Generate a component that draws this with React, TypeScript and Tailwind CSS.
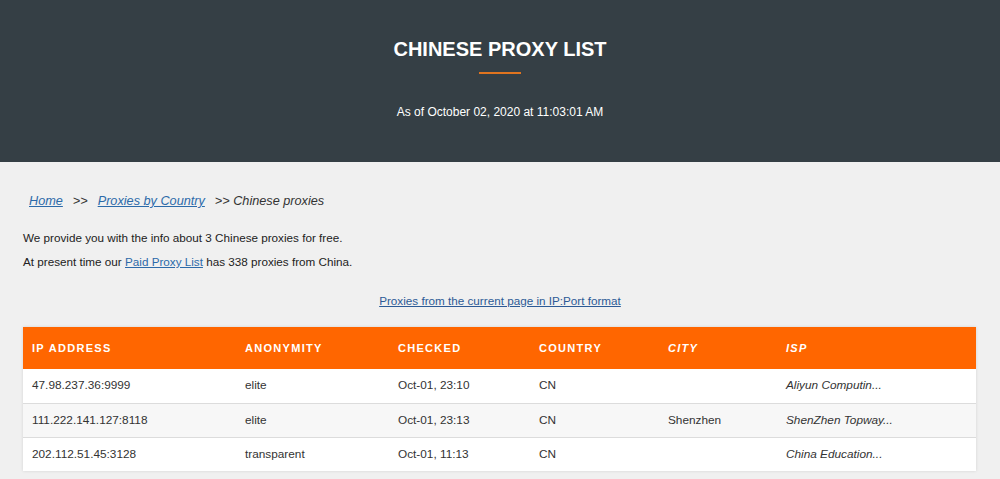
import React from 'react';

interface ProxyRow { ip: string; anon: string; checked: string; country: string; city: string; isp: string; }

const rows: ProxyRow[] = [
  { ip: '47.98.237.36:9999', anon: 'elite', checked: 'Oct-01, 23:10', country: 'CN', city: '', isp: 'Aliyun Computin...' },
  { ip: '111.222.141.127:8118', anon: 'elite', checked: 'Oct-01, 23:13', country: 'CN', city: 'Shenzhen', isp: 'ShenZhen Topway...' },
  { ip: '202.112.51.45:3128', anon: 'transparent', checked: 'Oct-01, 11:13', country: 'CN', city: '', isp: 'China Education...' },
];

const cols = 'grid grid-cols-[213px_153px_141px_129px_118px_1fr]';

export default function App() {
  return (
    <div className="min-h-[479px] bg-[#f0f0f0] font-['Liberation_Sans',Arial,sans-serif]">
      <header className="h-[162px] bg-[#353f45] flex flex-col items-center text-white">
        <h1 className="mt-[37px] text-[20px] font-bold leading-[24px]">CHINESE PROXY LIST</h1>
        <div className="mt-[11px] h-[2px] w-[42px] bg-[#e0741f]" />
        <p className="mt-[31px] text-[12px] leading-[14px]">As of October 02, 2020 at 11:03:01 AM</p>
      </header>

      <main className="px-[23px]">
        <nav className="pt-[31px] pl-[6px] text-[12.7px] italic text-[#333] leading-[16px] flex gap-[10px]">
          <a href="#" className="text-[#2c6aa9] underline">Home</a>
          <span>&gt;&gt;</span>
          <a href="#" className="text-[#2c6aa9] underline">Proxies by Country</a>
          <span>&gt;&gt; Chinese proxies</span>
        </nav>

        <div className="mt-[22px] text-[11.7px] text-[#222] leading-[14px] space-y-[10px]">
          <p>We provide you with the info about 3 Chinese proxies for free.</p>
          <p>At present time our <a href="#" className="text-[#2c6aa9] underline">Paid Proxy List</a> has 338 proxies from China.</p>
        </div>

        <p className="mt-[25px] text-center text-[11.7px] leading-[14px]">
          <a href="#" className="text-[#2c5a96] underline">Proxies from the current page in IP:Port format</a>
        </p>

        <div className="mt-[19px] w-[953px] bg-white shadow-[0_0_3px_rgba(0,0,0,0.12)]">
          <div className={`${cols} h-[42px] items-center bg-[#ff6600] text-white text-[11px] font-bold tracking-[1.3px] pl-[9px]`}>
            <span>IP ADDRESS</span>
            <span>ANONYMITY</span>
            <span>CHECKED</span>
            <span>COUNTRY</span>
            <span className="italic">CITY</span>
            <span className="italic">ISP</span>
          </div>
          {rows.map((r, i) => (
            <div
              key={r.ip}
              className={`${cols} h-[34px] items-center pl-[9px] text-[11.8px] text-[#333] ${i % 2 === 1 ? 'bg-[#f7f7f7]' : 'bg-white'} ${i > 0 ? 'border-t border-[#dcdcdc]' : ''}`}
            >
              <span>{r.ip}</span>
              <span>{r.anon}</span>
              <span>{r.checked}</span>
              <span>{r.country}</span>
              <span>{r.city}</span>
              <span className="italic">{r.isp}</span>
            </div>
          ))}
        </div>
      </main>
    </div>
  );
}
